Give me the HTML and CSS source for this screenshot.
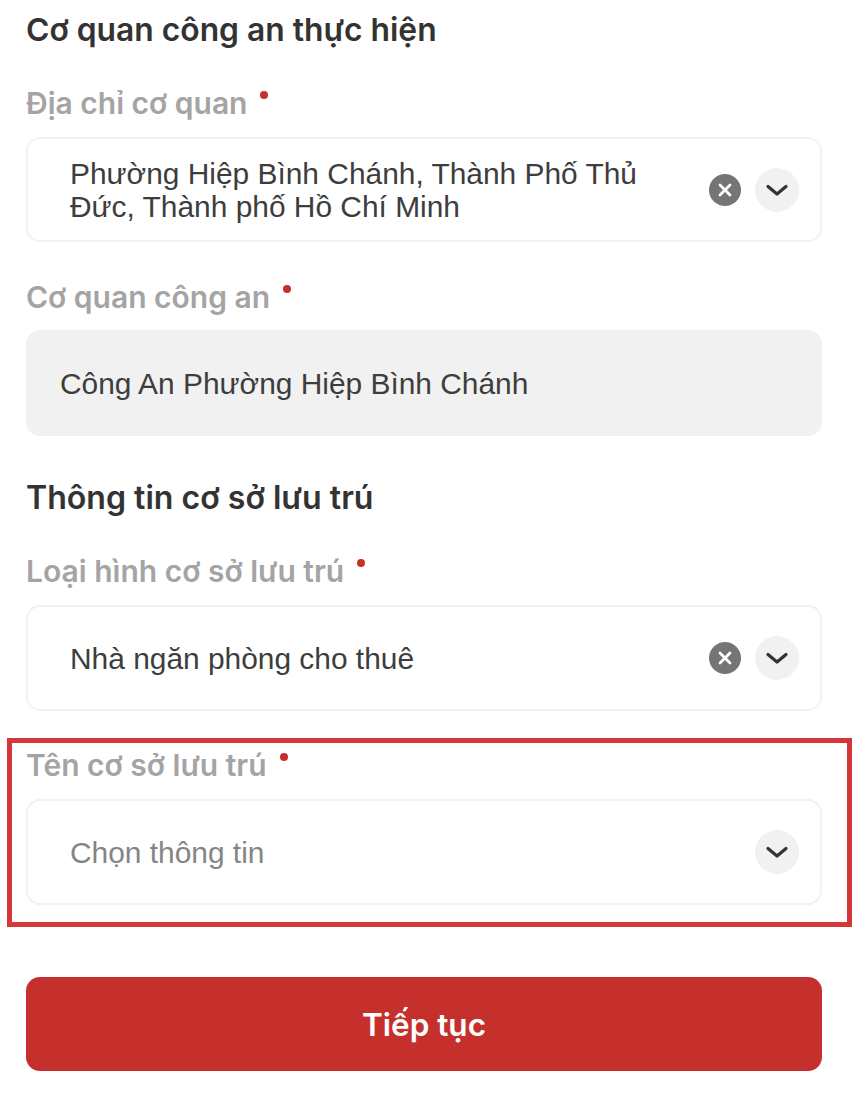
FILE: index.html
```html
<!DOCTYPE html>
<html lang="vi">
<head>
<meta charset="utf-8">
<title>Cơ quan công an thực hiện</title>
<link rel="stylesheet" href="styles.css">
</head>
<body>
<main class="page">
  <h2 class="heading heading-first">Cơ quan công an thực hiện</h2>
  <div class="field field-address">
    <div class="label">Địa chỉ cơ quan<span class="dot"></span></div>
    <div class="select">
      <div class="value">Phường Hiệp Bình Chánh, Thành Phố Thủ<br>Đức, Thành phố Hồ Chí Minh</div>
      <svg class="clear" viewBox="0 0 32 32"><circle cx="16" cy="16" r="16" fill="#757575"/><path d="M11 11l10 10M21 11l-10 10" stroke="#fff" stroke-width="2.8" stroke-linecap="round"/></svg>
      <svg class="chev" viewBox="0 0 44 44"><circle cx="22" cy="22" r="22" fill="#f1f1f1"/><path d="M13 18.5l9 7.5 9-7.5" fill="none" stroke="#333" stroke-width="3.2" stroke-linecap="round" stroke-linejoin="round"/></svg>
    </div>
  </div>
  <div class="field field-agency">
    <div class="label">Cơ quan công an<span class="dot"></span></div>
    <div class="readonly">Công An Phường Hiệp Bình Chánh</div>
  </div>
  <h2 class="heading heading-second">Thông tin cơ sở lưu trú</h2>
  <div class="field field-type">
    <div class="label">Loại hình cơ sở lưu trú<span class="dot"></span></div>
    <div class="select">
      <div class="value">Nhà ngăn phòng cho thuê</div>
      <svg class="clear" viewBox="0 0 32 32"><circle cx="16" cy="16" r="16" fill="#757575"/><path d="M11 11l10 10M21 11l-10 10" stroke="#fff" stroke-width="2.8" stroke-linecap="round"/></svg>
      <svg class="chev" viewBox="0 0 44 44"><circle cx="22" cy="22" r="22" fill="#f1f1f1"/><path d="M13 18.5l9 7.5 9-7.5" fill="none" stroke="#333" stroke-width="3.2" stroke-linecap="round" stroke-linejoin="round"/></svg>
    </div>
  </div>
  <div class="highlight">
    <div class="label">Tên cơ sở lưu trú<span class="dot"></span></div>
    <div class="select">
      <div class="value placeholder">Chọn thông tin</div>
      <svg class="chev" viewBox="0 0 44 44"><circle cx="22" cy="22" r="22" fill="#f1f1f1"/><path d="M13 18.5l9 7.5 9-7.5" fill="none" stroke="#333" stroke-width="3.2" stroke-linecap="round" stroke-linejoin="round"/></svg>
    </div>
  </div>
  <button class="submit" type="button">Tiếp tục</button>
</main>
</body>
</html>
```
FILE: styles.css
```css
* { box-sizing: border-box; }
html, body { margin: 0; padding: 0; background: #fff; }
body { width: 866px; height: 1098px; overflow: hidden; font-family: "Liberation Sans", Arial, sans-serif; }
.page { padding: 10px 44px 0 26px; display: flex; flex-direction: column; }
.heading { margin: 0; font-family: Inter, sans-serif; font-weight: 600; font-size: 31.8px; line-height: 40px; color: #333; }
.field-address { margin-top: 33px; }
.field-agency { margin-top: 35px; }
.heading-second { margin-top: 42px; font-size: 32.1px; }
.field-type { margin-top: 33px; }
.label { font-family: Inter, sans-serif; font-weight: 600; font-size: 30px; line-height: 40px; height: 40px; color: #a4a4a4; }
.dot { display: inline-block; width: 8px; height: 8px; border-radius: 50%; background: #c5302c; margin-left: 13px; vertical-align: 15px; }
.select { margin-top: 14px; height: 106px; border: 2px solid #f2f2f2; border-radius: 14px; padding-left: 42px; padding-right: 21px; display: flex; align-items: center; }
.field-address .select { height: 105px; }
.value { flex: 1; font-size: 29.9px; line-height: 33px; color: #3d3d3d; }
.placeholder { color: #858585; }
.clear { width: 32px; height: 32px; margin-right: 14px; flex: none; }
.chev { width: 44px; height: 44px; flex: none; }
.readonly { margin-top: 13px; height: 106px; padding-top: 1px; border-radius: 14px; background: #f1f1f1; padding-left: 34px; display: flex; align-items: center; font-size: 29.9px; color: #3d3d3d; }
.highlight { margin: 27px -30px 0 -19px; padding: 2px 25px 17px 14px; border: 5px solid #d4363a; height: 189px; }
.submit { margin-top: 50px; height: 94px; border: 0; border-radius: 14px; background: #c5302c; color: #fff; font-family: Inter, sans-serif; font-weight: 600; font-size: 31.5px; }
```
